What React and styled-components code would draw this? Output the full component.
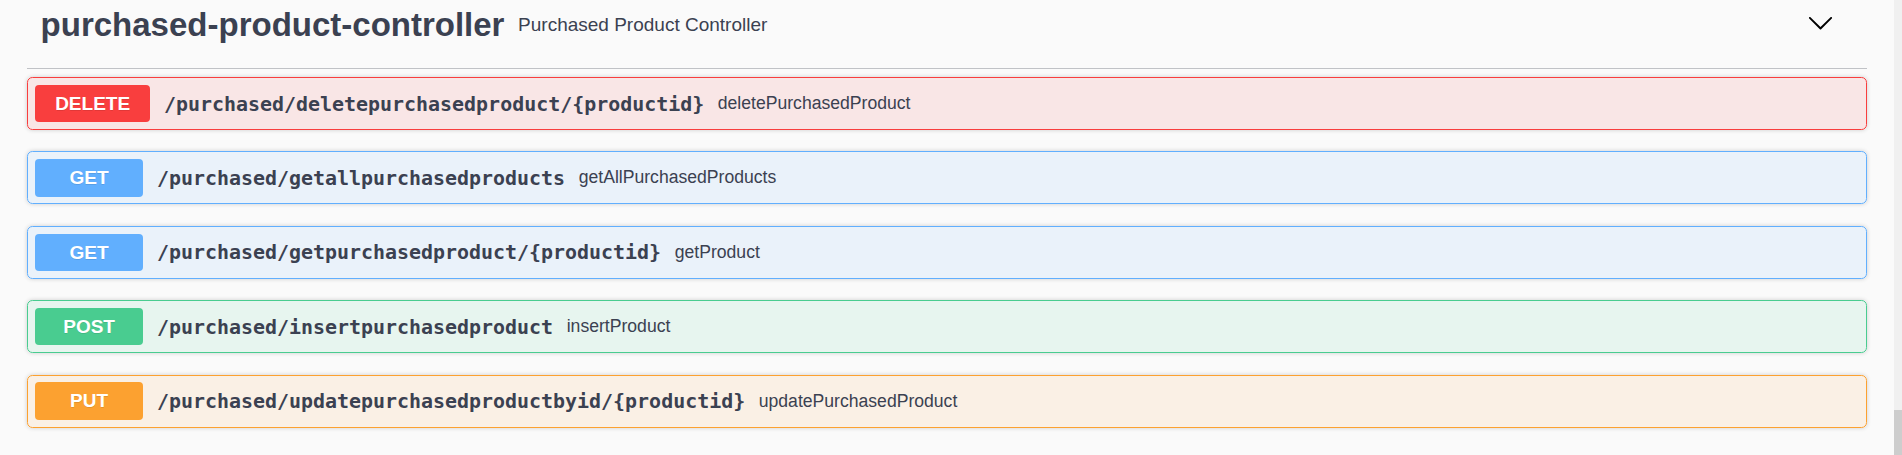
import React from "react";
import styled, { createGlobalStyle } from "styled-components";

const GlobalStyle = createGlobalStyle`
  html, body {
    margin: 0;
    padding: 0;
    background: #fafafa;
    overflow: hidden;
  }
  * { box-sizing: border-box; }
`;

const Page = styled.div`
  display: flex;
  height: 455px;
  background: #fafafa;
`;

const Main = styled.main`
  flex: 1;
  min-width: 0;
  padding: 0 27px;
`;

const ScrollTrack = styled.div`
  width: 8px;
  background: #f0f0f0;
  display: flex;
  flex-direction: column;
`;

const ScrollThumb = styled.div`
  margin-top: auto;
  height: 45px;
  background: #cdcdcd;
`;

const TagHeader = styled.div`
  display: flex;
  align-items: center;
  height: 69px;
  padding: 0 32.6px 17.6px 13.6px;
  border-bottom: 1px solid rgba(59, 65, 81, 0.3);
  margin-bottom: 8px;
  cursor: pointer;
`;

const TagTitle = styled.h3`
  margin: 0;
  font-family: "Liberation Sans", Arial, sans-serif;
  font-weight: 700;
  font-size: 33px;
  color: #3b4151;
`;

const TagDesc = styled.small`
  flex: 2;
  padding: 0 13.6px;
  font-family: "Liberation Sans", Arial, sans-serif;
  font-weight: 400;
  font-size: 19px;
  color: #3b4151;
`;

const ExpandButton = styled.button`
  display: flex;
  border: none;
  background: none;
  padding: 0;
  margin: 0 0 4.6px 0;
  cursor: pointer;
`;

const methodColors = {
  DELETE: "249, 62, 62",
  GET: "97, 175, 254",
  POST: "73, 204, 144",
  PUT: "252, 161, 48",
};

const Block = styled.div`
  display: flex;
  align-items: center;
  padding: 6.8px;
  margin-bottom: 21.3px;
  border: 1px solid rgb(${(p) => methodColors[p.$method]});
  border-radius: 5.4px;
  background: rgba(${(p) => methodColors[p.$method]}, 0.1);
  box-shadow: 0 0 4px rgba(0, 0, 0, 0.19);
  cursor: pointer;
`;

const MethodBadge = styled.span`
  min-width: 108.6px;
  padding: 8px 20.35px;
  border-radius: 4px;
  background: rgb(${(p) => methodColors[p.$method]});
  color: #fff;
  font-family: "Liberation Sans", Arial, sans-serif;
  font-weight: 700;
  font-size: 19px;
  line-height: 21.5px;
  text-align: center;
  text-shadow: 0 1px 0 rgba(0, 0, 0, 0.1);
`;

const Path = styled.span`
  padding: 0 13.6px;
  font-family: "DejaVu Sans Mono", "Liberation Mono", monospace;
  font-weight: 700;
  font-size: 19.95px;
  color: #3b4151;
`;

const Summary = styled.span`
  flex: 1 1 auto;
  font-family: "Liberation Sans", Arial, sans-serif;
  font-size: 17.6px;
  color: #3b4151;
`;

const ops = [
  { method: "DELETE", path: "/purchased/deletepurchasedproduct/{productid}", summary: "deletePurchasedProduct" },
  { method: "GET", path: "/purchased/getallpurchasedproducts", summary: "getAllPurchasedProducts" },
  { method: "GET", path: "/purchased/getpurchasedproduct/{productid}", summary: "getProduct" },
  { method: "POST", path: "/purchased/insertpurchasedproduct", summary: "insertProduct" },
  { method: "PUT", path: "/purchased/updatepurchasedproductbyid/{productid}", summary: "updatePurchasedProduct" },
];

function Chevron() {
  return (
    <svg width="27" height="27" viewBox="0 0 20 20" aria-hidden="true">
      <path
        fill="#000"
        d="M17.418 6.109c.272-.268.709-.268.979 0s.271.701 0 .969l-7.908 7.83c-.27.268-.707.268-.979 0l-7.908-7.830c-.27-.268-.27-.701 0-.969.271-.268.709-.268.979 0L10 13.25l7.418-7.141z"
      />
    </svg>
  );
}

export default function App() {
  return (
    <>
      <GlobalStyle />
      <Page>
        <Main>
          <TagHeader>
            <TagTitle>purchased-product-controller</TagTitle>
            <TagDesc>Purchased Product Controller</TagDesc>
            <ExpandButton aria-label="collapse">
              <Chevron />
            </ExpandButton>
          </TagHeader>
          {ops.map((op) => (
            <Block key={op.path} $method={op.method}>
              <MethodBadge $method={op.method}>{op.method}</MethodBadge>
              <Path>{op.path}</Path>
              <Summary>{op.summary}</Summary>
            </Block>
          ))}
        </Main>
        <ScrollTrack>
          <ScrollThumb />
        </ScrollTrack>
      </Page>
    </>
  );
}
